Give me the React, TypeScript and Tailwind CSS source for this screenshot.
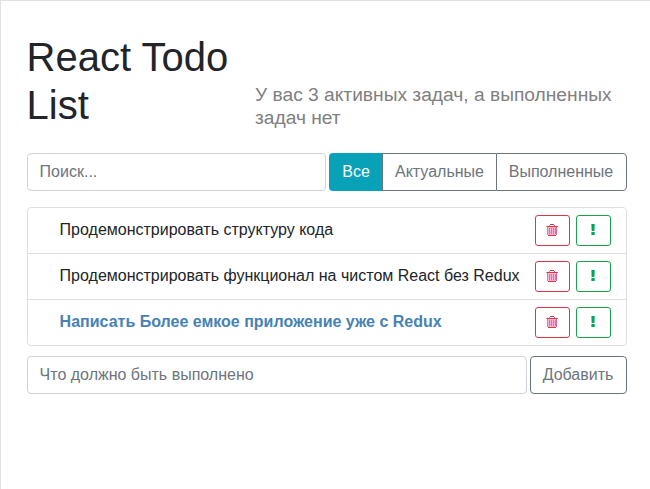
import React from 'react';

const todos = [
  { id: 1, label: 'Продемонстрировать структуру кода', important: false },
  { id: 2, label: 'Продемонстрировать функционал на чистом React без Redux', important: false },
  { id: 3, label: 'Написать Более емкое приложение уже с Redux', important: true },
];

function TrashIcon() {
  return (
    <svg className="mb-px mr-px" width="12" height="12" viewBox="0 0 12 12" shapeRendering="crispEdges">
      <rect x="1" y="3" width="10" height="8" fill="#f0b4d4" />
      <path d="M3 4h1v6H3zM5 4h1v6H5zM7 4h1v6H7zM9 4h1v6H9z" fill="#c774d2" />
      <path d="M1 2h10v1H1zM4 0h4v1H4zM2 11h8v1H2z" fill="#dc3545" />
      <path d="M0 2h1v1H0zM3 1h1v1H3z" fill="#f0975f" />
      <path d="M11 2h1v1h-1zM8 1h1v1H8z" fill="#e25a7c" />
      <path d="M1 3h1v8H1z" fill="#ea7f78" />
      <path d="M10 3h1v8h-1z" fill="#e0659c" />
    </svg>
  );
}

function ImportantIcon() {
  return (
    <svg className="mb-0.5 mr-px" width="4" height="11" viewBox="0 0 4 11">
      <path d="M0 0h1v7H.4zM0 8h1v3H0z" fill="#8fbd4c" />
      <path d="M1 0h2v7H1zM1 8h2v3H1z" fill="#08a34b" />
      <path d="M3 0h1L3.6 7H3zM3 8h1v3H3z" fill="#2cc3b0" />
    </svg>
  );
}

export default function App() {
  return (
    <main className="h-[489px] w-[650px] overflow-hidden border-l border-t border-[#dee2e6] bg-white pl-[25.6px] pr-[23px] pt-8 font-['Liberation_Sans',Arial,sans-serif] text-base text-[#212529]">
      <header className="flex items-end">
        <h1 className="w-[228.4px] shrink-0 text-[40px] leading-[48px]">React Todo List</h1>
        <h2 className="text-[19.2px] leading-[23px] text-[#808080]">
          У вас 3 активных задач, а выполненных задач нет
        </h2>
      </header>

      <div className="mt-6 flex h-[38px] gap-[3px]">
        <input
          className="min-w-0 flex-1 rounded border border-[#ced4da] px-3 outline-none placeholder:text-[#6c757d]"
          placeholder="Поиск..."
        />
        <div className="flex w-[298px] text-[#6c757d]">
          <button className="w-[53px] rounded-l bg-[#07a2b8] pl-px text-white">Все</button>
          <button className="w-[114px] border border-r-0 border-[#6c757d]">Актуальные</button>
          <button className="flex-1 rounded-r border border-[#6c757d] pr-px">Выполненные</button>
        </div>
      </div>

      <ul className="mt-4 divide-y divide-[#dfdfdf] rounded border border-[#dfdfdf]">
        {todos.map((todo) => (
          <li key={todo.id} className="flex h-[46px] items-center gap-1.5 pl-8 pr-[15px] last:h-[45px]">
            <span className={`flex-1 whitespace-nowrap pb-0.5 ${todo.important ? 'font-bold text-[#4682b4]' : ''}`}>
              {todo.label}
            </span>
            <button className="flex h-[31px] w-[35px] items-center justify-center rounded-[3px] border border-[#dc3545]" aria-label="Удалить">
              <TrashIcon />
            </button>
            <button className="flex h-[31px] w-[35px] items-center justify-center rounded-[3px] border border-[#17a34a]" aria-label="Важное">
              <ImportantIcon />
            </button>
          </li>
        ))}
      </ul>

      <form className="mt-2.5 flex h-[38px] gap-[3px]">
        <input
          className="min-w-0 flex-1 rounded border border-[#ced4da] px-3 outline-none placeholder:text-[#6c757d]"
          placeholder="Что должно быть выполнено"
        />
        <button type="button" className="w-[97px] rounded border border-[#6c757d] pr-px text-[#6c757d]">
          Добавить
        </button>
      </form>
    </main>
  );
}
